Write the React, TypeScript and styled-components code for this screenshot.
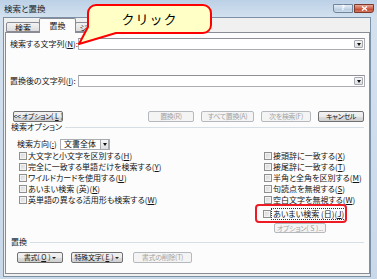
import React from "react";
import styled, { createGlobalStyle } from "styled-components";

const GlobalStyle = createGlobalStyle`
  html, body { margin: 0; padding: 0; }
  body {
    width: 377px;
    height: 279px;
    overflow: hidden;
    font-family: "Noto Sans CJK JP", "Noto Sans", sans-serif;
    font-feature-settings: "palt";
    font-size: 8px;
    line-height: 10px;
    white-space: nowrap;
    color: #141414;
  }
`;

const Window = styled.div`
  position: relative;
  width: 377px;
  height: 279px;
  box-sizing: border-box;
  padding: 0 6px 2px 3px;
  display: flex;
  flex-direction: column;
  background: linear-gradient(#bcd0e6, #d3e1ef 17px, #c9d9ea);
`;

const TitleBar = styled.div`
  height: 17px;
  display: flex;
  justify-content: space-between;
  align-items: flex-start;
`;

const Title = styled.div`
  padding: 3px 0 0 1px;
  font-size: 8.5px;
  color: #1b1b1b;
`;

const Caption = styled.div`
  display: flex;
  margin: 4px -3px 0 0;
`;

const CaptionButton = styled.div<{ $close?: boolean }>`
  width: 20px;
  height: 9px;
  box-sizing: border-box;
  display: flex;
  align-items: center;
  justify-content: center;
  border: 1px solid ${(p) => (p.$close ? "#7a3a2e" : "#71869c")};
  border-radius: ${(p) => (p.$close ? "0 0 3px 0" : "0 0 0 3px")};
  background: ${(p) =>
    p.$close
      ? "linear-gradient(#e9a998, #d0634c 50%, #c2402a 51%, #d77a5f)"
      : "linear-gradient(#e3ecf6, #c8d7e8 50%, #b5c8de 51%, #cfdcea)"};
  color: #fff;
  font: bold 7px/7px "DejaVu Sans", sans-serif;
  margin-left: ${(p) => (p.$close ? "1px" : "0")};
`;

const Client = styled.div`
  flex: 1;
  display: flex;
  flex-direction: column;
  background: #f0f0f0;
  border: 1px solid #7d91a6;
  padding: 0 0 2px 1px;
`;

const TabStrip = styled.div`
  height: 14px;
  display: flex;
  align-items: flex-end;
  padding-left: 1px;
`;

const Tab = styled.div<{ $active?: boolean; $w: number }>`
  position: relative;
  z-index: ${(p) => (p.$active ? 1 : 0)};
  width: ${(p) => p.$w}px;
  height: ${(p) => (p.$active ? 15 : 10)}px;
  margin-bottom: ${(p) => (p.$active ? -1 : 0)}px;
  box-sizing: border-box;
  border: 1px solid #898c95;
  border-bottom: ${(p) => (p.$active ? "none" : "1px solid #898c95")};
  border-radius: 2px 2px 0 0;
  background: ${(p) =>
    p.$active ? "#fcfcfc" : "linear-gradient(#f3f3f3, #e6e6e6 60%, #dcdcdc)"};
  display: flex;
  justify-content: center;
  padding-top: ${(p) => (p.$active ? 2 : 0)}px;
  font-size: 8px;
  line-height: 9px;
  overflow: hidden;
  & + & {
    margin-left: -1px;
  }
`;

const Panel = styled.div`
  flex: 1;
  display: flex;
  flex-direction: column;
  border: 1px solid #898c95;
  background: #fcfcfc;
  padding: 0 4px;
`;

const FieldRow = styled.div<{ $top: number }>`
  display: flex;
  align-items: center;
  height: 12px;
  margin-top: ${(p) => p.$top}px;
`;

const FieldLabel = styled.div`
  width: 68px;
`;

const Combo = styled.div`
  flex: 1;
  height: 12px;
  box-sizing: border-box;
  border: 1px solid #abadb3;
  border-top-color: #8e9096;
  background: #fff;
  display: flex;
  justify-content: flex-end;
  align-items: center;
  padding-right: 1px;
`;

const DropButton = styled.div<{ $h?: number }>`
  width: 9px;
  height: ${(p) => p.$h ?? 8}px;
  box-sizing: border-box;
  border: 1px solid #a5a9b0;
  border-radius: 1px;
  background: linear-gradient(#f6f6f6, #dedede);
  display: flex;
  align-items: center;
  justify-content: center;
  &::after {
    content: "";
    border-left: 2.5px solid transparent;
    border-right: 2.5px solid transparent;
    border-top: 3px solid #111;
  }
`;

const ButtonRow = styled.div<{ $top: number }>`
  display: flex;
  align-items: center;
  gap: 7px;
  height: 11px;
  margin-top: ${(p) => p.$top}px;
`;

const Button = styled.div<{ $w: number; $disabled?: boolean; $push?: boolean; $left?: number }>`
  width: ${(p) => p.$w}px;
  height: 11px;
  box-sizing: border-box;
  margin-left: ${(p) => (p.$push ? "auto" : `${p.$left ?? 0}px`)};
  border: 1px solid ${(p) => (p.$disabled ? "#b5b9bd" : "#707070")};
  border-radius: 2px;
  background: ${(p) =>
    p.$disabled
      ? "#f4f4f4"
      : "linear-gradient(#f2f2f2, #ebebeb 50%, #dddddd 51%, #cfcfcf)"};
  color: ${(p) => (p.$disabled ? "#a3a3a3" : "#141414")};
  display: flex;
  align-items: center;
  justify-content: center;
  gap: 2px;
  font-size: 7px;
  line-height: 9px;
  letter-spacing: -0.3px;
  overflow: hidden;
`;

const Caret = styled.span`
  border-left: 2px solid transparent;
  border-right: 2px solid transparent;
  border-top: 2.5px solid #222;
`;

const GroupHeader = styled.div<{ $top: number }>`
  display: flex;
  align-items: center;
  height: 10px;
  margin-top: ${(p) => p.$top}px;
  padding-left: 1px;
  &::after {
    content: "";
    flex: 1;
    height: 1px;
    margin: 1px 1px 0 3px;
    background: #d5dfe5;
  }
`;

const Options = styled.div`
  display: flex;
  margin-top: 6px;
`;

const LeftColumn = styled.div`
  width: 252px;
  padding-left: 7px;
  box-sizing: border-box;
`;

const RightColumn = styled.div`
  display: flex;
  flex-direction: column;
  align-items: flex-start;
  padding: 12px 0 0 1px;
`;

const DirectionRow = styled.div`
  display: flex;
  align-items: center;
  height: 12px;
`;

const DirectionLabel = styled.div`
  width: 43px;
`;

const Select = styled.div`
  width: 50px;
  height: 11px;
  box-sizing: border-box;
  border: 1px solid #abadb3;
  background: #fff;
  display: flex;
  align-items: center;
  justify-content: space-between;
  padding: 0 0 0 3px;
`;

const CheckRow = styled.div<{ $top?: number; $indent?: number }>`
  position: relative;
  display: flex;
  align-items: center;
  height: 11px;
  margin-top: ${(p) => p.$top ?? 0}px;
  padding-left: ${(p) => p.$indent ?? 2}px;
`;

const Box = styled.span`
  width: 8px;
  height: 8px;
  box-sizing: border-box;
  margin-right: 1px;
  border: 1px solid #8e8f8f;
  background: linear-gradient(135deg, #d4d4d4, #f4f4f4);
  box-shadow: inset 0 0 0 1px #f2f2f2;
`;

const FocusLabel = styled.span`
  outline: 1px dotted #333;
  padding: 0 1px;
  line-height: 10px;
`;

const Highlight = styled.div`
  position: absolute;
  left: -8px;
  top: -4px;
  width: 92px;
  height: 19px;
  box-sizing: border-box;
  border: 2px solid #ee1b24;
  border-radius: 4px;
  pointer-events: none;
`;

const SmallButton = styled(Button)`
  height: 10px;
  margin: 4px 0 0 11px;
`;

const Callout = styled.div`
  position: absolute;
  left: 76px;
  top: 0;
  width: 140px;
  height: 48px;
  pointer-events: none;
`;

const CalloutShape = styled.svg`
  position: absolute;
  inset: 0;
`;

const CalloutText = styled.div`
  position: absolute;
  left: 12px;
  top: 5px;
  width: 123px;
  height: 28px;
  display: flex;
  align-items: center;
  justify-content: center;
  font-size: 13px;
  letter-spacing: 1px;
  font-feature-settings: normal;
  color: #000;
`;

const U = styled.u`
  text-decoration-thickness: 1px;
  text-underline-offset: 1px;
`;

const leftChecks = [
  <>大文字と小文字を区別する(<U>H</U>)</>,
  <>完全に一致する単語だけを検索する(<U>Y</U>)</>,
  <>ワイルドカードを使用する(<U>U</U>)</>,
  <>あいまい検索 (英)(<U>K</U>)</>,
  <>英単語の異なる活用形も検索する(<U>W</U>)</>,
];

const rightChecks = [
  <>接頭辞に一致する(<U>X</U>)</>,
  <>接尾辞に一致する(<U>T</U>)</>,
  <>半角と全角を区別する(<U>M</U>)</>,
  <>句読点を無視する(<U>S</U>)</>,
  <>空白文字を無視する(<U>W</U>)</>,
];

export default function App() {
  return (
    <>
      <GlobalStyle />
      <Window>
        <TitleBar>
          <Title>検索と置換</Title>
          <Caption>
            <CaptionButton>?</CaptionButton>
            <CaptionButton $close>
              <svg width="7" height="5" viewBox="0 0 7 5">
                <path d="M1 0.5 L6 4.5 M6 0.5 L1 4.5" stroke="#fff" strokeWidth="1.4" />
              </svg>
            </CaptionButton>
          </Caption>
        </TitleBar>
        <Client>
          <TabStrip>
            <Tab $w={34}>検索</Tab>
            <Tab $w={37} $active>
              置換
            </Tab>
            <Tab $w={48}>ジャンプ(G)</Tab>
          </TabStrip>
          <Panel>
            <FieldRow $top={5}>
              <FieldLabel>
                検索する文字列(<U>N</U>):
              </FieldLabel>
              <Combo>
                <DropButton />
              </Combo>
            </FieldRow>
            <FieldRow $top={25}>
              <FieldLabel>
                置換後の文字列(<U>I</U>):
              </FieldLabel>
              <Combo>
                <DropButton />
              </Combo>
            </FieldRow>
            <ButtonRow $top={24}>
              <Button $w={50} $left={3}>
                &lt;&lt; オプション(<U>L</U>)
              </Button>
              <Button $w={46} $push $disabled>
                置換(R)
              </Button>
              <Button $w={53} $disabled>
                すべて置換(A)
              </Button>
              <Button $w={50} $disabled>
                次を検索(F)
              </Button>
              <Button $w={46} style={{ marginRight: 1 }}>
                キャンセル
              </Button>
            </ButtonRow>
            <GroupHeader $top={0}>検索オプション</GroupHeader>
            <Options>
              <LeftColumn>
                <DirectionRow>
                  <DirectionLabel>
                    検索方向(<U>:</U>)
                  </DirectionLabel>
                  <Select>
                    文書全体
                    <DropButton $h={11} />
                  </Select>
                </DirectionRow>
                {leftChecks.map((label, i) => (
                  <CheckRow key={i}>
                    <Box />
                    {label}
                  </CheckRow>
                ))}
              </LeftColumn>
              <RightColumn>
                {rightChecks.map((label, i) => (
                  <CheckRow key={i} $indent={1}>
                    <Box />
                    {label}
                  </CheckRow>
                ))}
                <CheckRow $top={3} $indent={0}>
                  <Box />
                  <FocusLabel>
                    あいまい検索 (日)(<U>J</U>)
                  </FocusLabel>
                  <Highlight />
                </CheckRow>
                <SmallButton $w={52} $disabled>
                  オプション(<U>S</U>)...
                </SmallButton>
              </RightColumn>
            </Options>
            <GroupHeader $top={4}>置換</GroupHeader>
            <ButtonRow $top={5}>
              <Button $w={46} $left={7}>
                書式(<U>O</U>) <Caret />
              </Button>
              <Button $w={52} $left={1}>
                特殊文字(<U>E</U>) <Caret />
              </Button>
              <Button $w={59} $left={3} $disabled>
                書式の削除(T)
              </Button>
            </ButtonRow>
          </Panel>
        </Client>
        <Callout>
          <CalloutShape width="140" height="48" viewBox="76 0 140 48">
            <path
              d="M96 5 H203 A8 8 0 0 1 211 13 V25 A8 8 0 0 1 203 33 H116 L79 44 L88 27 V13 A8 8 0 0 1 96 5 Z"
              fill="#ffffc6"
              stroke="#ff0000"
              strokeWidth="2"
              strokeLinejoin="round"
            />
          </CalloutShape>
          <CalloutText>クリック</CalloutText>
        </Callout>
      </Window>
    </>
  );
}
